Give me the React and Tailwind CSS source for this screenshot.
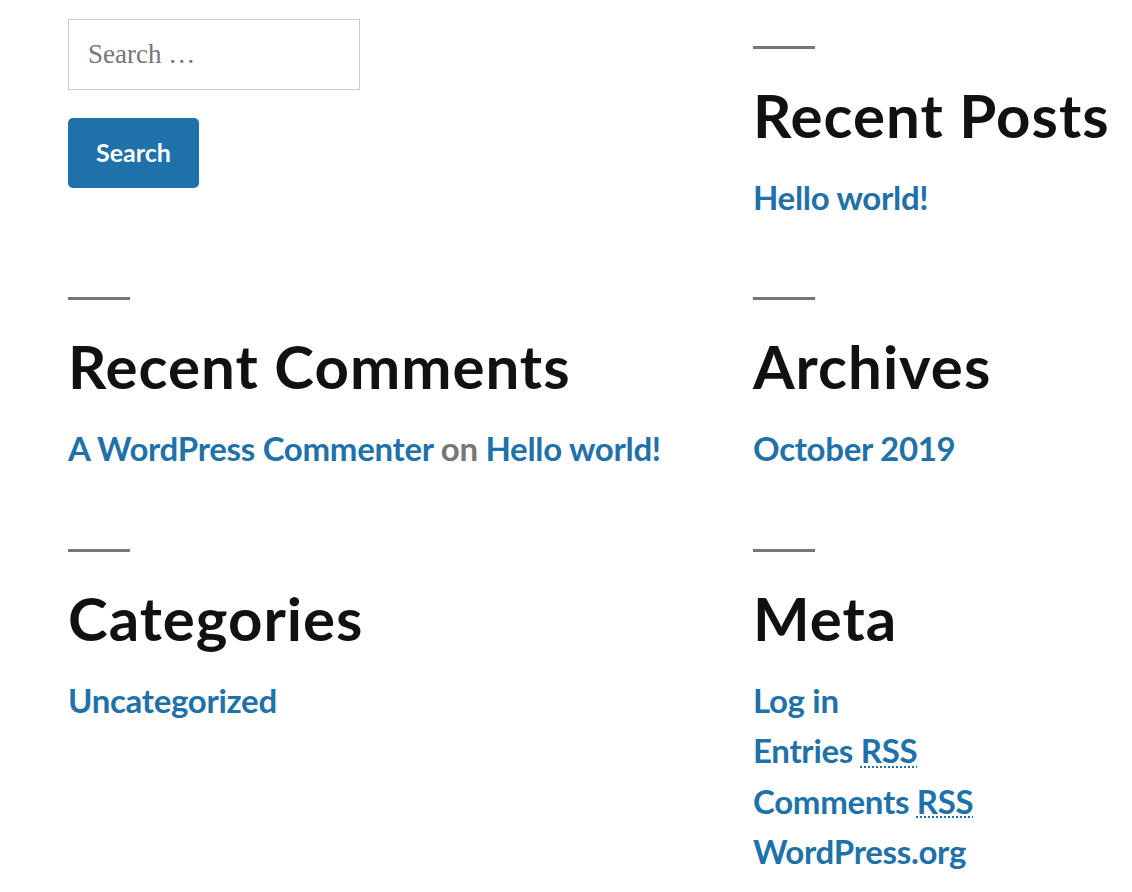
import React from "react";

const font = { fontFamily: 'Lato, "Open Sans", sans-serif' };

function Widget({ title, children }) {
  return (
    <section className="pb-[75px]">
      <div className="h-[3px] w-[62px] bg-[#767676]" />
      <h2 className="mt-[30px] text-[60px] leading-[72px] font-bold text-[#111111] tracking-[1px]">{title}</h2>
      <div className="mt-[21px] text-[33px] leading-[50.4px] font-bold text-[#1f72a9] tracking-[-0.3px]">{children}</div>
    </section>
  );
}

function Rss() {
  return (
    <abbr className="underline decoration-dotted decoration-[2px] underline-offset-[3px] decoration-[#1f72a9]" title="Really Simple Syndication">
      RSS
    </abbr>
  );
}

export default function App() {
  return (
    <div className="w-[1132px] h-[892px] bg-white overflow-hidden" style={font}>
      <div className="grid grid-cols-[685px_1fr] pl-[68px]">
        <div className="pt-[19px]">
          <div className="w-[292px] h-[71px] border border-[#cccccc] flex items-center pl-[19px]">
            <span className="text-[27px] text-[#767676]" style={{ fontFamily: '"Liberation Serif", serif' }}>Search …</span>
          </div>
          <button className="mt-[28px] w-[131px] h-[70px] rounded-[5px] bg-[#1f72a9] text-white text-[25px] font-bold">Search</button>
        </div>
        <div className="pt-[46px]">
          <Widget title="Recent Posts">
            <a>Hello world!</a>
          </Widget>
        </div>
        <Widget title="Recent Comments">
          <a>A WordPress Commenter</a> <span className="text-[#767676]">on</span> <a>Hello world!</a>
        </Widget>
        <Widget title="Archives">
          <a>October 2019</a>
        </Widget>
        <Widget title="Categories">
          <a>Uncategorized</a>
        </Widget>
        <Widget title="Meta">
          <ul>
            <li>Log in</li>
            <li>Entries <Rss /></li>
            <li>Comments <Rss /></li>
            <li>WordPress.org</li>
          </ul>
        </Widget>
      </div>
    </div>
  );
}
